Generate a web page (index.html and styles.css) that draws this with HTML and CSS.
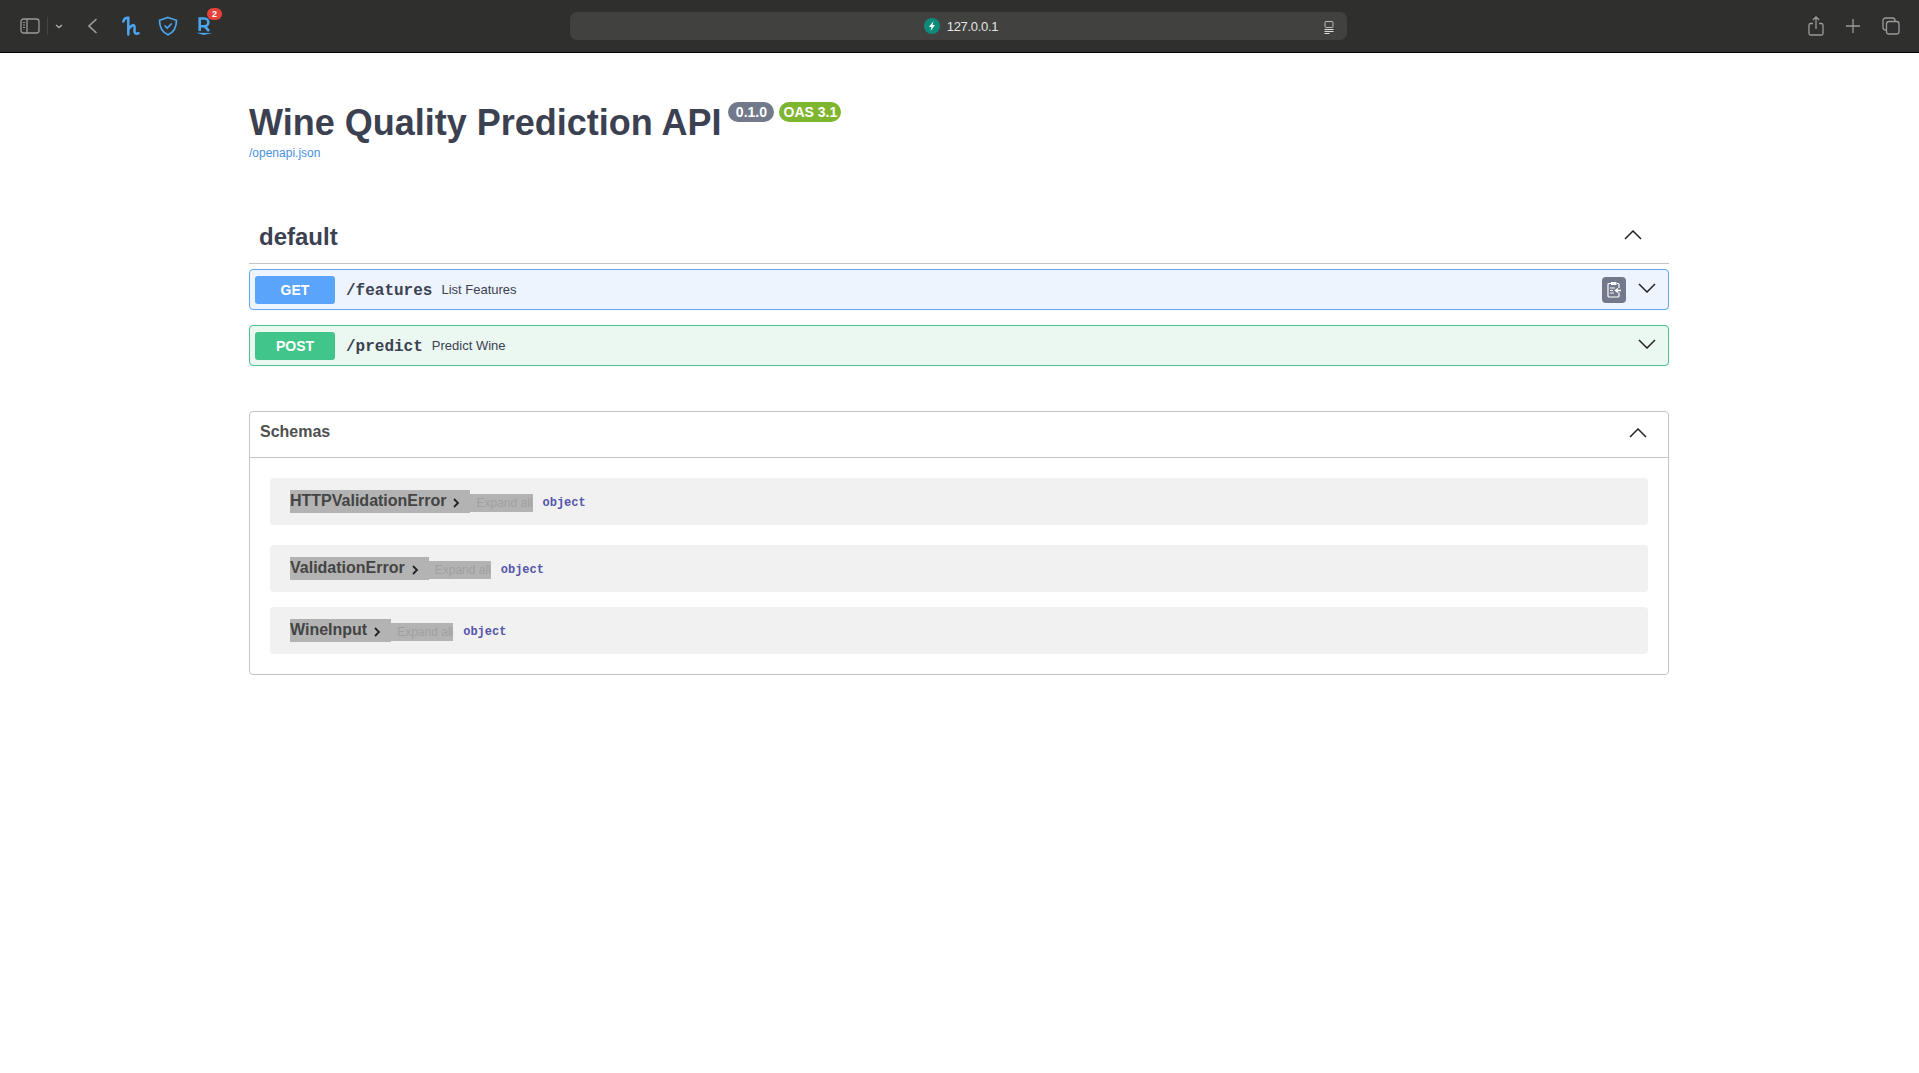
FILE: index.html
```html
<!DOCTYPE html>
<html lang="en">
<head>
<meta charset="utf-8">
<title>Wine Quality Prediction API</title>
<link rel="stylesheet" href="styles.css">
</head>
<body>
<header class="toolbar">
  <div class="tools-left">
    <svg class="ico sidebar" width="20" height="16" viewBox="0 0 20 16"><rect x="1" y="1" width="18" height="14" rx="2.500" fill="none" stroke="#9a9a9a" stroke-width="1.300"/><path d="M7 1v14" stroke="#9a9a9a" stroke-width="1.300"/><path d="M3 4.500h2M3 7h2M3 9.500h2" stroke="#9a9a9a" stroke-width="1"/></svg>
    <span class="tool-sep"></span>
    <svg class="ico drop" width="8" height="5" viewBox="0 0 8 5"><path d="M1 1l3 2.500L7 1" fill="none" stroke="#aaa" stroke-width="1.400"/></svg>
    <svg class="ico back" width="11" height="16" viewBox="0 0 11 16"><path d="M9.500 1L2 8l7.500 7" fill="none" stroke="#9c9c9c" stroke-width="1.700"/></svg>
    <svg class="ico honey" width="18" height="20" viewBox="0 0 18 20"><path d="M1.300 5.500C2 3 4 1.500 6.300 1.800V18.500M6.500 13.500C8 10.500 10.500 8.800 12 9.500c1.200 1 .2 4.500.6 6.500.4 2 2.400 2 4 1.200" fill="none" stroke="#4ba6f0" stroke-width="2.500" stroke-linecap="round"/></svg>
    <svg class="ico shield" width="20" height="20" viewBox="0 0 20 20"><path d="M10 1.500l8.500 2.800c0 6.500-1.500 11.500-8.500 14.500C3 15.800 1.500 10.800 1.500 4.300z" fill="none" stroke="#4ba6f0" stroke-width="1.700"/><path d="M6.500 9.500l2.700 2.500 4.500-4.500" fill="none" stroke="#4ba6f0" stroke-width="1.700"/></svg>
    <span class="rakuten">
      <svg width="18" height="20" viewBox="0 0 18 20"><path d="M3.700 15V2.500h4.800a3.800 3.800 0 0 1 0 7.700H3.700M8.500 10.200L13 15" fill="none" stroke="#4ba6f0" stroke-width="2.600"/><path d="M.5 16.800l16 .3-9 2z" fill="#4ba6f0"/></svg>
      <span class="badge-count">2</span>
    </span>
  </div>
  <div class="address">
    <span class="address-main">
      <svg width="16" height="16" viewBox="0 0 16 16"><circle cx="8" cy="8" r="8" fill="#0e8a7a"/><path d="M9.500 3L5 9h2.500L6.500 13 11 7H8.500z" fill="#fff"/></svg>
      <span class="host">127.0.0.1</span>
    </span>
    <svg class="reader" width="10" height="13" viewBox="0 0 10 13"><rect x="1" y=".5" width="8" height="6" rx="1" fill="none" stroke="#bbb"/><path d="M.5 8.500h9M.5 10.500h9M.5 12.500h5" stroke="#ddd"/></svg>
  </div>
  <div class="tools-right">
    <svg width="16" height="20" viewBox="0 0 16 20"><path d="M5 7.500H2.500A1.500 1.500 0 0 0 1 9v8.500A1.500 1.500 0 0 0 2.500 19h11a1.500 1.500 0 0 0 1.500-1.500V9a1.500 1.500 0 0 0-1.500-1.500H11M8 13V1M4.800 4L8 1l3.200 3" fill="none" stroke="#9a9a9a" stroke-width="1.300"/></svg>
    <svg width="14" height="14" viewBox="0 0 14 14"><path d="M7 0v14M0 7h14" stroke="#9a9a9a" stroke-width="1.300"/></svg>
    <svg width="18" height="18" viewBox="0 0 18 18"><rect x="1" y="1" width="12" height="12" rx="2.500" fill="none" stroke="#9a9a9a" stroke-width="1.300"/><rect x="4.500" y="4.500" width="12.500" height="12.500" rx="2.500" fill="#2f2f2f" stroke="#9a9a9a" stroke-width="1.300"/></svg>
  </div>
</header>
<main class="page">
  <section class="info">
    <div class="title-row">
      <h1 class="title">Wine Quality Prediction API</h1>
      <span class="pill pill-version">0.1.0</span>
      <span class="pill pill-oas">OAS 3.1</span>
    </div>
    <a class="spec-link" href="#">/openapi.json</a>
  </section>
  <section class="tag">
    <div class="tag-head">
      <h2 class="tag-name">default</h2>
      <svg class="chev chev-tag" width="18" height="10" viewBox="0 0 18 10"><path d="M1 9l8-8 8 8" fill="none" stroke="#222" stroke-width="1.500"/></svg>
    </div>
    <div class="op op-get">
      <span class="method method-get">GET</span>
      <span class="path">/features</span>
      <span class="summary">List Features</span>
      <span class="copy"><svg width="14" height="17" viewBox="0 0 14 17"><path d="M4 2.500H2a1 1 0 0 0-1 1V15a1 1 0 0 0 1 1h9a1 1 0 0 0 1-1v-3.500M10 2.500h1a1 1 0 0 1 1 1V7" fill="none" stroke="#fff" stroke-width="1.200"/><rect x="4" y="1" width="5.500" height="3" fill="#fff"/><path d="M3 7h5M3 9.500h3M3 12h4" stroke="#fff"/><path d="M14 9.500H9M11 7.500l-2.500 2 2.500 2" fill="none" stroke="#fff" stroke-width="1.500"/></svg></span>
      <svg class="chev chev-op" width="18" height="10" viewBox="0 0 18 10"><path d="M1 1l8 8 8-8" fill="none" stroke="#222" stroke-width="1.500"/></svg>
    </div>
    <div class="op op-post">
      <span class="method method-post">POST</span>
      <span class="path">/predict</span>
      <span class="summary">Predict Wine</span>
      <svg class="chev chev-op" width="18" height="10" viewBox="0 0 18 10"><path d="M1 1l8 8 8-8" fill="none" stroke="#222" stroke-width="1.500"/></svg>
    </div>
  </section>
  <section class="schemas">
    <div class="schemas-head">
      <h3 class="schemas-title">Schemas</h3>
      <svg class="chev chev-schemas" width="18" height="10" viewBox="0 0 18 10"><path d="M1 9l8-8 8 8" fill="none" stroke="#222" stroke-width="1.500"/></svg>
    </div>
    <div class="schemas-body">
      <div class="model">
        <span class="model-name">HTTPValidationError<svg class="caret" width="7" height="10" viewBox="0 0 7 10"><path d="M1 1l4 4-4 4" fill="none" stroke="#222" stroke-width="1.800"/></svg></span>
        <span class="expand">Expand all</span>
        <span class="type">object</span>
      </div>
      <div class="model">
        <span class="model-name">ValidationError<svg class="caret" width="7" height="10" viewBox="0 0 7 10"><path d="M1 1l4 4-4 4" fill="none" stroke="#222" stroke-width="1.800"/></svg></span>
        <span class="expand">Expand all</span>
        <span class="type">object</span>
      </div>
      <div class="model">
        <span class="model-name">WineInput<svg class="caret" width="7" height="10" viewBox="0 0 7 10"><path d="M1 1l4 4-4 4" fill="none" stroke="#222" stroke-width="1.800"/></svg></span>
        <span class="expand">Expand all</span>
        <span class="type">object</span>
      </div>
    </div>
  </section>
</main>
</body>
</html>
```
FILE: styles.css
```css
* { box-sizing: border-box; }
html, body { margin: 0; padding: 0; background: #fff; }
body { font-family: "Liberation Sans", Arial, sans-serif; color: #3b4151; height: 1073px; overflow: hidden; }
svg { display: block; flex: none; }

.toolbar { height: 53px; background: #2f2f2e; border-bottom: 1px solid #000; display: flex; align-items: center; position: relative; }
.tools-left { flex: none; width: 570px; display: flex; align-items: center; padding-left: 20px; }
.tool-sep { width: 1px; height: 18px; background: #444; margin: 0 7px 0 7px; }
.back { margin-left: 24px; }
.honey { margin-left: 24px; }
.shield { margin-left: 18px; }
.rakuten { margin-left: 18px; position: relative; display: block; }
.badge-count { position: absolute; left: 11px; top: -8px; width: 15px; height: 12px; border-radius: 6px; background: #e8413c; color: #fff; font-size: 9px; font-weight: 700; line-height: 12px; text-align: center; }
.address { flex: none; width: 777px; height: 28px; background: #414140; border-radius: 7px; position: relative; display: flex; align-items: center; justify-content: center; padding-left: 5px; }
.address-main { display: flex; align-items: center; gap: 7px; }
.host { color: #e4e4e4; font-size: 13px; letter-spacing: -0.3px; }
.reader { position: absolute; right: 13px; top: 9px; }
.tools-right { flex: 1; display: flex; align-items: center; justify-content: flex-end; gap: 22px; padding-right: 19px; }

.page { width: 1420px; margin-left: 249px; }
.info { padding-top: 45px; }
.title-row { display: flex; align-items: flex-start; }
.title { margin: 0; font-size: 36px; line-height: 49px; font-weight: 700; color: #3b4151; }
.pill { margin-top: 4px; height: 20px; border-radius: 10px; color: #fff; font-size: 14px; font-weight: 700; line-height: 20px; text-align: center; }
.pill-version { width: 46px; margin-left: 7px; background: #71798a; }
.pill-oas { width: 62px; margin-left: 5px; background: #7fb62f; }
.spec-link { display: block; font-size: 12px; line-height: 13px; color: #4990e2; text-decoration: none; }

.tag { margin-top: 54px; }
.tag-head { height: 50px; border-bottom: 1px solid #c4c4c4; display: flex; align-items: center; justify-content: space-between; padding: 0 27px 0 10px; }
.tag-name { margin: 0; font-size: 24px; line-height: 32px; font-weight: 700; color: #3b4151; position: relative; top: -2px; }
.chev-tag { position: relative; top: -4px; }

.op { height: 41px; margin-top: 5px; border: 1px solid; border-radius: 4px; display: flex; align-items: center; padding: 0 12px 0 5px; box-shadow: 0 0 2px rgba(0, 0, 0, 0.06); }
.op + .op { margin-top: 15px; }
.op-get { background: #edf4fd; border-color: #61a8f0; }
.op-post { background: #ebf7f1; border-color: #49c48c; }
.method { width: 80px; height: 28px; border-radius: 3px; color: #fff; font-size: 14px; font-weight: 700; line-height: 28px; text-align: center; }
.method-get { background: #5aa5fb; }
.method-post { background: #42c58a; }
.path { margin-left: 11px; font-family: "Liberation Mono", "Courier New", monospace; font-size: 16px; font-weight: 700; color: #3b4151; position: relative; top: 1px; }
.summary { margin-left: 9px; font-size: 13px; color: #3b4151; }
.copy { margin-left: auto; width: 24px; height: 26px; background: #71798a; border-radius: 4px; display: flex; align-items: center; justify-content: center; }
.op .chev-op { margin-left: 12px; position: relative; top: -2px; }
.op-post .chev-op { margin-left: auto; }

.schemas { margin-top: 45px; border: 1px solid #c4c4c4; border-radius: 4px; height: 264px; }
.schemas-head { height: 46px; border-bottom: 1px solid #c4c4c4; display: flex; align-items: center; justify-content: space-between; padding: 0 21px 0 10px; }
.schemas-title { margin: 0; font-size: 16px; line-height: 20px; font-weight: 700; color: #505050; position: relative; top: -3px; }
.chev-schemas { position: relative; top: -2px; }
.schemas-body { padding: 20px 20px 0; display: flex; flex-direction: column; }
.model { height: 47px; background: #f1f1f1; border-radius: 4px; padding-left: 20px; display: flex; align-items: center; margin-bottom: 20px; }
.model:nth-child(2) { margin-bottom: 15px; }
.model-name { height: 23px; background: #b3b3b3; display: flex; align-items: center; font-size: 16px; font-weight: 700; color: #444; padding: 0 10px 2px 0; }
.caret { margin-left: 7px; position: relative; top: 2px; }
.expand { height: 18px; background: #b3b3b3; color: #a0a0a0; font-size: 12px; line-height: 18px; padding-left: 6px; position: relative; top: 1px; white-space: nowrap; }
.type { margin-left: 10px; font-family: "Liberation Mono", "Courier New", monospace; font-size: 12px; font-weight: 700; color: #55a; position: relative; top: 1px; }
```
